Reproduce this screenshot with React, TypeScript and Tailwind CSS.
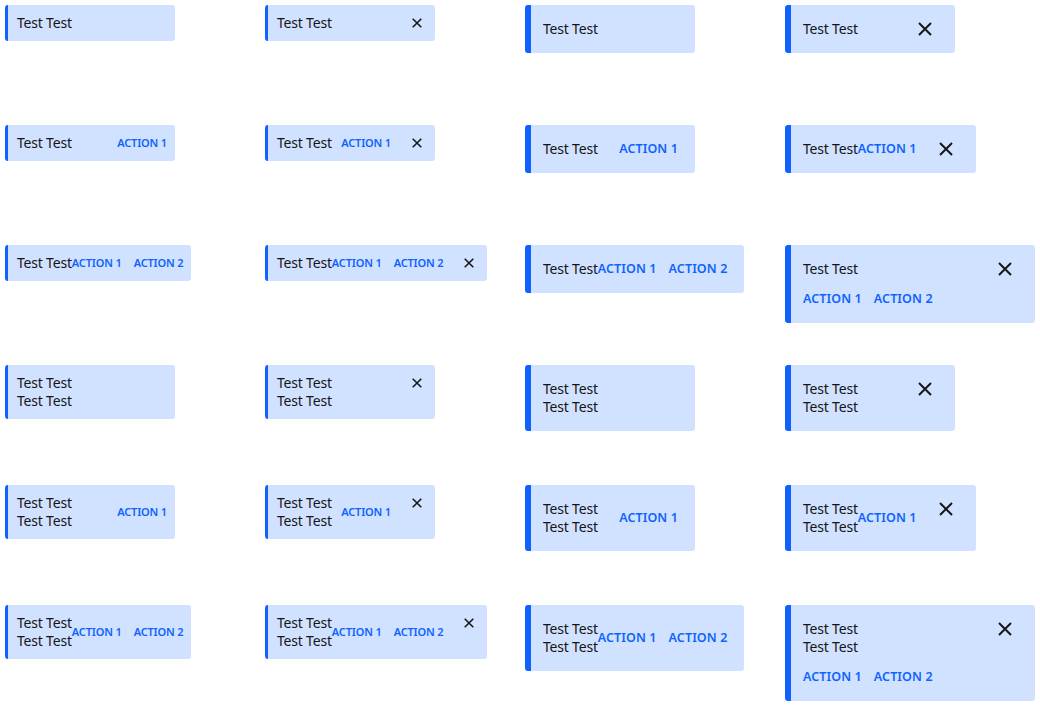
import clsx from 'clsx';

type Size = 'sm' | 'lg';

const CloseIcon = ({ size }: { size: Size }) => {
  const s = size === 'lg' ? 14 : 10;
  return (
    <svg width={s} height={s} viewBox="0 0 14 14" fill="none">
      <path d="M1 1L13 13M13 1L1 13" stroke="#161616" strokeWidth={size === 'lg' ? 2 : 2.2} />
    </svg>
  );
};

const Notification = ({
  size,
  lines,
  actions,
  close,
}: {
  size: Size;
  lines: 1 | 2;
  actions: 0 | 1 | 2;
  close: boolean;
}) => {
  const lg = size === 'lg';
  const stacked = lg && close && actions === 2;
  const actionCls = clsx('uppercase font-semibold', lg ? 'tracking-[0.1px]' : 'tracking-[-0.15px]');

  return (
    <div
      className={clsx(
        'flex rounded-[3px] bg-[#d0e2ff] border-l-[#0f62fe] text-[#161616]',
        lg ? 'border-l-[6px] pl-[12px]' : 'border-l-[3px] pl-[9px]',
        stacked ? 'min-w-[250px]' : 'min-w-[170px]',
        lg && close && 'pr-[8px]'
      )}
    >
      <div
        className={clsx(
          'flex flex-1',
          stacked ? 'flex-col gap-[12px]' : 'items-center',
          lg ? 'py-[15px]' : 'py-[9px]',
          !lg && 'pr-[8px]',
          lg && !close && 'pr-[17px]',
          lg && close && !stacked && 'pr-[7px]'
        )}
      >
        <div className="flex-1 text-[14px] leading-[18px] tracking-[-0.2px]">
          <div>Test Test</div>
          {lines === 2 && <div>Test Test</div>}
        </div>
        {actions > 0 && (
          <div
            className={clsx(
              'flex gap-[12px] text-[#0f62fe] leading-[18px]',
              lg ? 'text-[12.5px]' : 'text-[11px]'
            )}
          >
            <button className={actionCls}>Action 1</button>
            {actions === 2 && <button className={actionCls}>Action 2</button>}
          </div>
        )}
      </div>
      {close && (
        <button
          className={clsx(
            'flex items-center justify-center self-start shrink-0',
            lg ? 'w-[44px] h-[48px]' : 'w-[36px] h-[36px]'
          )}
        >
          <CloseIcon size={size} />
        </button>
      )}
    </div>
  );
};

const rows: { lines: 1 | 2; actions: 0 | 1 | 2 }[] = [
  { lines: 1, actions: 0 },
  { lines: 1, actions: 1 },
  { lines: 1, actions: 2 },
  { lines: 2, actions: 0 },
  { lines: 2, actions: 1 },
  { lines: 2, actions: 2 },
];

const cols: { size: Size; close: boolean }[] = [
  { size: 'sm', close: false },
  { size: 'sm', close: true },
  { size: 'lg', close: false },
  { size: 'lg', close: true },
];

export default function App() {
  return (
    <div
      className="w-[1040px] h-[720px] bg-white p-[5px]"
      style={{ fontFamily: '"Noto Sans", "Open Sans", sans-serif' }}
    >
      <div className="grid grid-cols-[repeat(4,260px)] auto-rows-[120px]">
        {rows.map((r, i) =>
          cols.map((c, j) => (
            <div key={`${i}-${j}`} className="flex items-start">
              <Notification size={c.size} close={c.close} lines={r.lines} actions={r.actions} />
            </div>
          ))
        )}
      </div>
    </div>
  );
}
